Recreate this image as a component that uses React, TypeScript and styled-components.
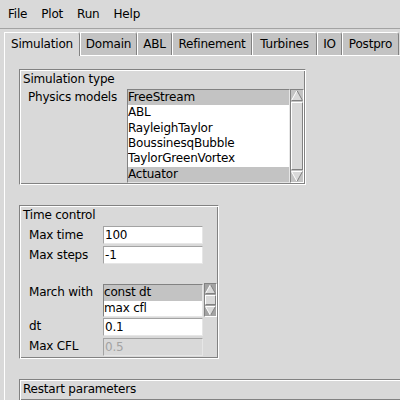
import React from 'react';
import styled, { createGlobalStyle } from 'styled-components';

const DARK = '#828282';
const LIGHT = '#ffffff';

const Global = createGlobalStyle`
  html, body { margin: 0; padding: 0; background: #d9d9d9; }
  body {
    font-family: "DejaVu Sans", "Noto Sans", sans-serif;
    font-size: 12px;
    letter-spacing: -0.2px;
    color: #000;
    width: 400px;
    height: 400px;
    overflow: hidden;
  }
  * { box-sizing: border-box; }
`;

const Window = styled.div`
  width: 400px;
  height: 400px;
  display: flex;
  flex-direction: column;
  overflow: hidden;
  background: #d9d9d9;
`;

const MenuBar = styled.div`
  height: 29px;
  display: flex;
  align-items: center;
  padding: 0 0 1px 1px;
  border-bottom: 1px solid #a3a3a3;
`;

const MenuItem = styled.span`
  padding: 0 7px;
  line-height: 16px;
`;

const TabBar = styled.div`
  display: flex;
  align-items: flex-end;
  padding: 3px 0 0 4px;
  height: 26px;
`;

const Tab = styled.div<{ $active?: boolean; $w: number }>`
  position: relative;
  z-index: 1;
  width: ${(p) => p.$w}px;
  flex-shrink: 0;
  height: ${(p) => (p.$active ? 24 : 23)}px;
  margin-bottom: ${(p) => (p.$active ? -1 : 0)}px;
  display: flex;
  justify-content: center;
  align-items: flex-start;
  padding-top: 4px;
  line-height: 15px;
  background: ${(p) => (p.$active ? '#d9d9d9' : '#c3c3c3')};
  border-top: 1px solid ${LIGHT};
  border-left: 1px solid ${LIGHT};
  border-right: 1px solid ${DARK};
  border-top-right-radius: 3px;
  border-top-left-radius: 1px;
  white-space: nowrap;
`;

const Pane = styled.div`
  flex: 1;
  margin-left: 4px;
  border-left: 1px solid ${LIGHT};
  border-top: 1px solid ${LIGHT};
  padding: 13px 0 0 14px;
  display: flex;
  flex-direction: column;
  gap: 20px;
  overflow: hidden;
`;

const Group = styled.div<{ $w: number }>`
  width: ${(p) => p.$w}px;
  flex-shrink: 0;
  border: 1px solid;
  border-color: ${DARK} ${LIGHT} ${LIGHT} ${DARK};
  box-shadow: inset 1px 1px ${LIGHT}, inset -1px -1px ${DARK};
  padding: 1px;
  display: flex;
  flex-direction: column;
`;

const GroupTitle = styled.div`
  height: 18px;
  line-height: 16px;
  padding-left: 2px;
  white-space: nowrap;
`;

const Row = styled.div<{ $h?: number }>`
  display: flex;
  align-items: flex-start;
  height: ${(p) => (p.$h ? `${p.$h}px` : 'auto')};
`;

const FieldLabel = styled.div<{ $w: number; $pad: number; $top?: number }>`
  width: ${(p) => p.$w}px;
  padding-left: ${(p) => p.$pad}px;
  padding-top: ${(p) => p.$top ?? 0}px;
  line-height: 15px;
  white-space: nowrap;
  flex-shrink: 0;
`;

const Entry = styled.div<{ $disabled?: boolean }>`
  margin: 1px;
  width: 100px;
  height: 18px;
  border: 1px solid;
  border-color: #a3a3a3 #e6e6e6 #e6e6e6 #a3a3a3;
  background: ${(p) => (p.$disabled ? '#d9d9d9' : '#ffffff')};
  color: ${(p) => (p.$disabled ? '#a3a3a3' : '#000')};
  padding-left: 1px;
  line-height: 16px;
  white-space: nowrap;
  overflow: hidden;
`;

const ListBox = styled.div<{ $w: number; $h: number; $m?: number }>`
  width: ${(p) => p.$w}px;
  height: ${(p) => p.$h}px;
  margin: ${(p) => p.$m ?? 0}px;
  border: 1px solid;
  border-color: ${DARK} #e6e6e6 #e6e6e6 ${DARK};
  background: #fff;
  display: flex;
  flex-direction: column;
  overflow: hidden;
  flex-shrink: 0;
`;

const ListItem = styled.div<{ $sel?: boolean; $h: number }>`
  height: ${(p) => p.$h}px;
  line-height: ${(p) => p.$h}px;
  padding-left: 0px;
  background: ${(p) => (p.$sel ? '#c3c3c3' : 'transparent')};
  white-space: nowrap;
`;

const ScrollBar = styled.div<{ $w: number; $h: number; $trough: string }>`
  width: ${(p) => p.$w}px;
  height: ${(p) => p.$h}px;
  flex-shrink: 0;
  border: 1px solid;
  border-color: ${DARK} ${LIGHT} ${LIGHT} ${DARK};
  background: ${(p) => p.$trough};
  display: flex;
  flex-direction: column;
`;

const ArrowBox = styled.div<{ $h: number }>`
  height: ${(p) => p.$h}px;
  flex-shrink: 0;
  display: flex;
`;

const Slider = styled.div`
  flex: 1;
  margin: 1px 0;
  background: #d9d9d9;
  border: 1px solid;
  border-color: ${LIGHT} ${DARK} ${DARK} ${LIGHT};
`;

const Arrow: React.FC<{ dir: 'up' | 'down'; w: number; h: number }> = ({ dir, w, h }) => {
  const l = 0.5;
  const r = w - 0.5;
  const m = w / 2;
  if (dir === 'up') {
    return (
      <svg width={w} height={h} viewBox={`0 0 ${w} ${h}`}>
        <polygon points={`${m},0.5 ${r},${h - 0.5} ${l},${h - 0.5}`} fill="#d9d9d9" />
        <polyline points={`${l},${h - 0.5} ${m},0.5`} stroke={LIGHT} fill="none" />
        <polyline points={`${m},0.5 ${r},${h - 0.5} ${l},${h - 0.5}`} stroke={DARK} fill="none" />
      </svg>
    );
  }
  return (
    <svg width={w} height={h} viewBox={`0 0 ${w} ${h}`}>
      <polygon points={`${l},0.5 ${r},0.5 ${m},${h - 0.5}`} fill="#d9d9d9" />
      <polyline points={`${m},${h - 0.5} ${l},0.5 ${r},0.5`} stroke={LIGHT} fill="none" />
      <polyline points={`${r},0.5 ${m},${h - 0.5}`} stroke={DARK} fill="none" />
    </svg>
  );
};

const VScroll: React.FC<{ w: number; h: number; arrowH: number; trough: string }> = ({ w, h, arrowH, trough }) => (
  <ScrollBar $w={w} $h={h} $trough={trough}>
    <ArrowBox $h={arrowH}>
      <Arrow dir="up" w={w - 2} h={arrowH} />
    </ArrowBox>
    <Slider />
    <ArrowBox $h={arrowH}>
      <Arrow dir="down" w={w - 2} h={arrowH} />
    </ArrowBox>
  </ScrollBar>
);

const models = ['FreeStream', 'ABL', 'RayleighTaylor', 'BoussinesqBubble', 'TaylorGreenVortex', 'Actuator'];
const selectedModels = new Set(['FreeStream', 'Actuator']);

const tabs: [string, number][] = [
  ['Simulation', 76],
  ['Domain', 57],
  ['ABL', 35],
  ['Refinement', 80],
  ['Turbines', 65],
  ['IO', 25],
  ['Postpro', 57],
];

export default function App() {
  return (
    <Window>
      <Global />
      <MenuBar>
        <MenuItem>File</MenuItem>
        <MenuItem>Plot</MenuItem>
        <MenuItem>Run</MenuItem>
        <MenuItem>Help</MenuItem>
      </MenuBar>
      <TabBar>
        {tabs.map(([t, w], i) => (
          <Tab key={t} $w={w} $active={i === 0}>
            {t}
          </Tab>
        ))}
      </TabBar>
      <Pane>
        <Group $w={287}>
          <GroupTitle>Simulation type</GroupTitle>
          <Row>
            <FieldLabel $w={106} $pad={7} $top={1}>
              Physics models
            </FieldLabel>
            <ListBox $w={163} $h={94}>
              {models.map((m) => (
                <ListItem key={m} $h={15.33} $sel={selectedModels.has(m)}>
                  {m}
                </ListItem>
              ))}
            </ListBox>
            <VScroll w={14} h={94} arrowH={11} trough="#c3c3c3" />
          </Row>
        </Group>

        <Group $w={200}>
          <GroupTitle>Time control</GroupTitle>
          <Row $h={20}>
            <FieldLabel $w={81} $pad={8} $top={3}>
              Max time
            </FieldLabel>
            <Entry>100</Entry>
          </Row>
          <Row $h={20}>
            <FieldLabel $w={81} $pad={8} $top={3}>
              Max steps
            </FieldLabel>
            <Entry>-1</Entry>
          </Row>
          <Row $h={18} />
          <Row $h={34}>
            <FieldLabel $w={81} $pad={8} $top={2}>
              March with
            </FieldLabel>
            <ListBox $w={100} $h={33} $m={1}>
              <ListItem $h={15.5} $sel>
                const dt
              </ListItem>
              <ListItem $h={15.5}>max cfl</ListItem>
            </ListBox>
            <VScroll w={13} h={34} arrowH={10} trough="#a3a3a3" />
          </Row>
          <Row $h={20}>
            <FieldLabel $w={81} $pad={8} $top={2}>
              dt
            </FieldLabel>
            <Entry>0.1</Entry>
          </Row>
          <Row $h={20}>
            <FieldLabel $w={81} $pad={8} $top={2}>
              Max CFL
            </FieldLabel>
            <Entry $disabled>0.5</Entry>
          </Row>
        </Group>

        <Group $w={420}>
          <GroupTitle>Restart parameters</GroupTitle>
        </Group>
      </Pane>
    </Window>
  );
}
